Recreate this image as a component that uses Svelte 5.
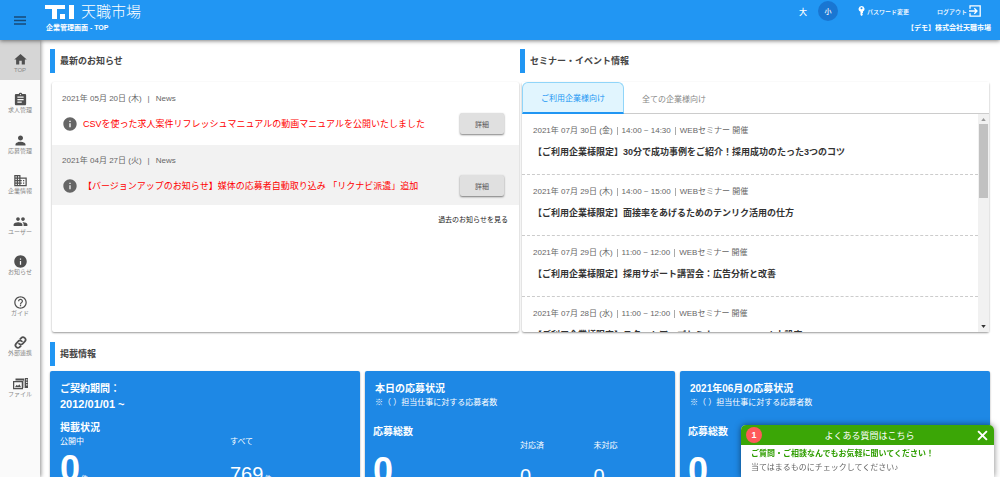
<script>
  const menu = [
    { label: 'TOP', icon: 'home', active: true },
    { label: '求人管理', icon: 'clipboard' },
    { label: '応募管理', icon: 'person' },
    { label: '企業情報', icon: 'building' },
    { label: 'ユーザー', icon: 'people' },
    { label: 'お知らせ', icon: 'info' },
    { label: 'ガイド', icon: 'help' },
    { label: '外部連携', icon: 'link' },
    { label: 'ファイル', icon: 'media' }
  ];

  const paths = {
    home: 'M10 20v-6h4v6h5v-8h3L12 3 2 12h3v8z',
    clipboard:
      'M19 3h-4.18C14.4 1.84 13.3 1 12 1s-2.4.84-2.82 2H5c-1.1 0-2 .9-2 2v14c0 1.1.9 2 2 2h14c1.1 0 2-.9 2-2V5c0-1.1-.9-2-2-2zm-7 0c.55 0 1 .45 1 1s-.45 1-1 1-1-.45-1-1 .45-1 1-1zm2 14H7v-2h7v2zm3-4H7v-2h10v2zm0-4H7V7h10v2z',
    person:
      'M12 12c2.21 0 4-1.79 4-4s-1.79-4-4-4-4 1.79-4 4 1.79 4 4 4zm0 2c-2.67 0-8 1.34-8 4v2h16v-2c0-2.66-5.33-4-8-4z',
    building:
      'M12 7V3H2v18h20V7H12zM6 19H4v-2h2v2zm0-4H4v-2h2v2zm0-4H4V9h2v2zm0-4H4V5h2v2zm4 12H8v-2h2v2zm0-4H8v-2h2v2zm0-4H8V9h2v2zm0-4H8V5h2v2zm10 12h-8v-2h2v-2h-2v-2h2v-2h-2V9h8v10zm-2-8h-2v2h2v-2zm0 4h-2v2h2v-2z',
    people:
      'M16 11c1.66 0 2.99-1.34 2.99-3S17.66 5 16 5s-3 1.34-3 3 1.34 3 3 3zm-8 0c1.66 0 2.99-1.34 2.99-3S9.66 5 8 5 5 6.34 5 8s1.34 3 3 3zm0 2c-2.33 0-7 1.17-7 3.5V19h14v-2.5c0-2.33-4.67-3.5-7-3.5zm8 0c-.29 0-.62.02-.97.05 1.16.84 1.97 1.97 1.97 3.45V19h6v-2.5c0-2.33-4.67-3.5-7-3.5z',
    info: 'M12 2C6.48 2 2 6.48 2 12s4.48 10 10 10 10-4.48 10-10S17.52 2 12 2zm1 15h-2v-6h2v6zm0-8h-2V7h2v2z',
    help: 'M11 18h2v-2h-2v2zm1-16C6.48 2 2 6.48 2 12s4.48 10 10 10 10-4.48 10-10S17.52 2 12 2zm0 18c-4.41 0-8-3.59-8-8s3.59-8 8-8 8 3.59 8 8-3.59 8-8 8zm0-14c-2.21 0-4 1.79-4 4h2c0-1.1.9-2 2-2s2 .9 2 2c0 2-3 1.75-3 5h2c0-2.25 3-2.5 3-5 0-2.21-1.79-4-4-4z',
    media:
      'M0 8h16v13H0zM2 10v9h12v-9zM3 18l3-4 2 2 2-3 3 5zM4 4h14v15h-1V7H4zM19 3h5v16h-5zM21 5v2h2V5zM21 9v2h2V9zM21 13v2h2v-2z'
  };

  const news = [
    {
      date: '2021年 05月 20日 (木)',
      title: 'CSVを使った求人案件リフレッシュマニュアルの動画マニュアルを公開いたしました'
    },
    {
      date: '2021年 04月 27日 (火)',
      title: '【バージョンアップのお知らせ】媒体の応募者自動取り込み 「リクナビ派遣」追加'
    }
  ];

  const seminars = [
    { date: '2021年 07月 30日 (金)', time: '14:00 ~ 14:30', title: '30分で成功事例をご紹介！採用成功のたった3つのコツ' },
    { date: '2021年 07月 29日 (木)', time: '14:00 ~ 15:00', title: '面接率をあげるためのテンリク活用の仕方' },
    { date: '2021年 07月 29日 (木)', time: '11:00 ~ 12:00', title: '採用サポート講習会：広告分析と改善' },
    { date: '2021年 07月 28日 (水)', time: '11:00 ~ 12:00', title: 'スタートアップセミナー@zoom Web上設定' }
  ];

  const applications = ['本日の応募状況', '2021年06月の応募状況'];

  let tab = $state(0);
  let chatOpen = $state(true);
</script>

{#snippet icon(name)}
  <svg class="icon" viewBox="0 0 24 24" aria-hidden="true">
    {#if name === 'link'}
      <g transform="rotate(-48 12 12)" fill="none" stroke="currentColor" stroke-width="2.8">
        <path d="M9 16H6a4 4 0 0 1 0-8h5a4 4 0 0 1 3.600 5.600" />
        <path d="M15 8h3a4 4 0 0 1 0 8h-5a4 4 0 0 1-3.600-5.600" />
      </g>
    {:else}
      <path fill="currentColor" fill-rule={name === 'media' ? 'evenodd' : 'nonzero'} d={paths[name]} />
    {/if}
  </svg>
{/snippet}

<div class="app">
  <header class="topbar">
    <button class="burger" aria-label="メニュー">
      <svg viewBox="0 0 12 9" aria-hidden="true"><path d="M0 1h12M0 4.5h12M0 8h12" stroke="currentColor" stroke-width="1.4" /></svg>
    </button>
    <div class="brand">
      <div class="logo">
        <svg viewBox="0 0 29 14" aria-hidden="true">
          <path fill="#fff" d="M0 0h20v4H12v10H7V4H0zM15 9h5v5h-5zM24 0h5v14h-5z" />
        </svg>
        <span>天職市場</span>
      </div>
      <div class="page-name">企業管理画面 - TOP</div>
    </div>
    <div class="account">
      <div class="tools">
        <button class="size">大</button>
        <button class="size on">小</button>
        <a class="password" href="#password">
          <svg viewBox="0 0 7 10" aria-hidden="true">
            <path fill="#fff" fill-rule="evenodd" d="M3.5 0a3 3 0 0 1 1.500 5.600V7l-1 .8 1 .9L3.600 10 2.500 9V5.800A3 3 0 0 1 3.500 0zm0 1.200a1 1 0 1 0 0 2 1 1 0 0 0 0-2z" />
          </svg>パスワード変更
        </a>
        <a class="logout" href="#logout">
          ログアウト<svg viewBox="0 0 12 12" fill="none" stroke="#fff" stroke-width="1.3" aria-hidden="true">
            <path d="M1 3.800V.8h10.200v10.400H1v-3M0 6h7.600M5.300 3.300 8 6 5.300 8.700" />
          </svg>
        </a>
      </div>
      <div class="company">【デモ】株式会社天職市場</div>
    </div>
  </header>

  <nav class="side">
    {#each menu as item}
      <a href="#{item.icon}" class:active={item.active}>{@render icon(item.icon)}<span>{item.label}</span></a>
    {/each}
  </nav>

  <main>
    <div class="columns">
      <section>
        <h2>最新のお知らせ</h2>
        <div class="card news">
          {#each news as item}
            <article>
              <div class="meta">{item.date}<i>|</i>News</div>
              <div class="line">
                {@render icon('info')}
                <a href="#news">{item.title}</a>
                <button>詳細</button>
              </div>
            </article>
          {/each}
          <a class="more" href="#past">過去のお知らせを見る</a>
        </div>
      </section>

      <section>
        <h2>セミナー・イベント情報</h2>
        <div class="card seminar">
          <div class="tabs" role="tablist">
            <button role="tab" aria-selected={tab === 0} class:on={tab === 0} onclick={() => (tab = 0)}>ご利用企業様向け</button>
            <button role="tab" aria-selected={tab === 1} class:on={tab === 1} onclick={() => (tab = 1)}>全ての企業様向け</button>
          </div>
          <div class="scroller">
            <div class="list">
              {#each seminars as s}
                <article>
                  <div class="meta">{s.date}<b></b>{s.time}<b></b>WEBセミナー 開催</div>
                  <h3>【ご利用企業様限定】{s.title}</h3>
                </article>
              {/each}
            </div>
            <div class="track" aria-hidden="true">
              <svg viewBox="0 0 6 4"><path d="M0 4 3 0 6 4z" fill="#999" /></svg>
              <div class="thumb"></div>
              <svg class="down" viewBox="0 0 6 4"><path d="M0 0 3 4 6 0z" fill="#333" /></svg>
            </div>
          </div>
        </div>
      </section>
    </div>

    <section class="posting">
      <h2>掲載情報</h2>
      <div class="stats">
        <div class="stat">
          <h3>ご契約期間：</h3>
          <p class="period">2012/01/01 ~</p>
          <h3>掲載状況</h3>
          <div class="pair">
            <div><span>公開中</span><div class="num"><strong>0</strong><small>件</small></div></div>
            <div><span>すべて</span><div class="num"><em>769</em><small>件</small></div></div>
          </div>
        </div>
        {#each applications as title}
          <div class="stat apply">
            <h3>{title}</h3>
            <p>※（ ）担当仕事に対する応募者数</p>
            <div class="trio">
              <div><h3>応募総数</h3><strong>0</strong></div>
              <div><span>対応済</span><em>0</em></div>
              <div><span>未対応</span><em>0</em></div>
            </div>
          </div>
        {/each}
      </div>
    </section>
  </main>

  {#if chatOpen}
    <aside class="chat">
      <header>
        <span class="badge">1</span>
        <span class="chat-title">よくある質問はこちら</span>
        <button aria-label="閉じる" onclick={() => (chatOpen = false)}>
          <svg viewBox="0 0 10 10" aria-hidden="true"><path d="M1 1l8 8M9 1 1 9" stroke="#fff" stroke-width="1.8" /></svg>
        </button>
      </header>
      <div class="chat-body">
        <b>ご質問・ご相談なんでもお気軽に聞いてください！</b>
        <span>当てはまるものにチェックしてください♪</span>
      </div>
    </aside>
  {/if}
</div>

<style>
  :global(body) {
    font-family: 'Liberation Sans', 'Noto Sans CJK JP', sans-serif;
    color: #444;
    background: #fff;
  }
  * {
    box-sizing: border-box;
  }
  h2,
  h3,
  p {
    margin: 0;
  }
  button {
    font: inherit;
    color: inherit;
    background: none;
    border: 0;
    padding: 0;
    cursor: pointer;
  }
  a {
    color: inherit;
    text-decoration: none;
  }
  svg {
    display: block;
    flex: none;
  }

  .app {
    display: grid;
    grid-template: auto 1fr / 40px 1fr;
    height: 100vh;
    overflow: hidden;
  }

  .topbar {
    grid-column: 1 / -1;
    display: flex;
    height: 40px;
    background: #2196f3;
    color: #fff;
    box-shadow: 0 1px 4px rgba(0, 0, 0, 0.5);
    z-index: 2;
  }
  .burger {
    width: 40px;
    display: grid;
    place-items: center;
    color: #174a78;
  }
  .burger svg {
    width: 12px;
    height: 9px;
  }
  .brand {
    padding: 3px 5px;
  }
  .logo {
    display: flex;
    align-items: center;
    gap: 7px;
    height: 18px;
    font-size: 15px;
    font-weight: 300;
    line-height: 18px;
  }
  .logo svg {
    width: 29px;
    height: 14px;
  }
  .page-name,
  .company {
    font-size: 7px;
    font-weight: 700;
    line-height: 14px;
  }
  .page-name {
    padding-left: 1px;
  }
  .account {
    margin-left: auto;
    padding: 1px 9px 0 0;
    text-align: right;
  }
  .tools {
    display: flex;
    align-items: center;
    justify-content: flex-end;
    height: 20px;
    font-size: 6px;
    font-weight: 500;
  }
  .size {
    width: 20px;
    height: 20px;
    border-radius: 50%;
    font-size: 8px;
  }
  .size.on {
    margin-left: 5px;
    background: #1976d2;
    font-size: 7px;
  }
  .password,
  .logout {
    display: flex;
    align-items: center;
    gap: 2px;
  }
  .password {
    margin-left: 20px;
  }
  .password svg {
    width: 7px;
    height: 10px;
  }
  .logout {
    margin: 0 10px 0 28px;
  }
  .logout svg {
    width: 12px;
    height: 12px;
  }

  .side {
    background: #fafafa;
    box-shadow: 1px 0 4px rgba(0, 0, 0, 0.45);
    z-index: 1;
  }
  .side a {
    display: flex;
    flex-direction: column;
    align-items: center;
    height: 40px;
    padding-top: 12px;
    color: #888;
    font-size: 6px;
    line-height: 7px;
  }
  .side a:nth-child(even) {
    height: 41px;
  }
  .side a.active {
    background: #d6d6d6;
  }
  .icon {
    width: 15px;
    height: 15px;
    color: #505050;
  }

  main {
    overflow-y: auto;
    scrollbar-width: none;
    padding: 9px 10px;
  }
  .columns {
    display: grid;
    grid-template-columns: 1fr 1fr;
  }
  section {
    min-width: 0;
  }
  h2 {
    border-left: 5px solid #2196f3;
    padding-left: 5px;
    font-size: 9px;
    line-height: 24px;
  }
  .card {
    margin: 9px 1px 0 2px;
    height: 250px;
    border-radius: 2px;
    box-shadow: 0 1px 2px rgba(0, 0, 0, 0.4);
  }
  .meta {
    display: flex;
    align-items: center;
    font-size: 8px;
    line-height: 12px;
    color: #666;
    white-space: pre;
  }
  .meta i {
    font-style: normal;
    margin: 0 6px;
  }
  .meta b {
    width: 1px;
    height: 8px;
    margin: 0 4px;
    background: #aaa;
  }

  .news article {
    height: 60px;
    padding: 10px 15px 0 10px;
  }
  .news article:first-child {
    height: 63px;
    padding-top: 11px;
  }
  .news article:nth-child(2) {
    background: #f2f2f2;
  }
  .line {
    display: flex;
    align-items: center;
    gap: 5px;
    margin-top: 8px;
    font-size: 9px;
    color: #f00;
  }
  .line .icon {
    width: 16px;
    height: 16px;
    color: #666;
  }
  .line a {
    white-space: nowrap;
  }
  .line button {
    margin-left: auto;
    width: 44px;
    height: 21px;
    border-radius: 2px;
    background: #e0e0e0;
    box-shadow: 0 1px 2px rgba(0, 0, 0, 0.5);
    color: #555;
    font-size: 7px;
  }
  .more {
    display: block;
    padding: 9px 11px;
    font-size: 7px;
    line-height: 12px;
    text-align: right;
    color: #222;
  }

  .seminar {
    display: flex;
    flex-direction: column;
  }
  .tabs {
    display: flex;
    height: 32px;
    background: #fff;
    border-bottom: 1px solid #ccc;
    font-size: 8px;
    color: #888;
  }
  .tabs button {
    height: 32px;
    padding: 0 18px;
    border-radius: 6px 6px 0 0;
  }
  .tabs button.on {
    border: 1px solid #90d5f9;
    border-bottom: 2px solid #2196f3;
    background: #e1f5fe;
    color: #2196f3;
  }
  .scroller {
    flex: 1;
    min-height: 0;
    display: flex;
  }
  .list {
    flex: 1;
    overflow-y: auto;
    scrollbar-width: none;
  }
  .list article {
    height: 61px;
    padding: 11px 10px 0 11px;
    border-bottom: 1px dashed #ccc;
  }
  .list h3 {
    margin-top: 8px;
    font-size: 9px;
    line-height: 14px;
    color: #333;
  }
  .track {
    width: 11px;
    display: flex;
    flex-direction: column;
    align-items: center;
    padding: 4px 1px;
    background: #f1f1f1;
  }
  .track svg {
    width: 5px;
    height: 3px;
  }
  .thumb {
    width: 9px;
    height: 74px;
    margin-top: 3px;
    background: #c1c1c1;
  }
  .down {
    margin-top: auto;
  }

  .posting {
    margin-top: 10px;
  }
  .stats {
    display: grid;
    grid-template-columns: repeat(3, 1fr);
    gap: 5px;
    margin-top: 5px;
  }
  .stat {
    height: 150px;
    padding: 10px;
    border-radius: 2px;
    background: #1e88e5;
    box-shadow: 0 1px 2px rgba(0, 0, 0, 0.4);
    color: #fff;
    font-size: 8px;
    line-height: 12px;
  }
  .stat h3 {
    font-size: 10px;
    line-height: 16px;
  }
  .period {
    margin-bottom: 8px;
    font-size: 11px;
    font-weight: 700;
    line-height: 15px;
  }
  .stat span,
  .stat em,
  .stat strong {
    display: block;
  }
  .stat em {
    font-size: 20px;
    font-style: normal;
    line-height: 24px;
  }
  .stat strong {
    font-size: 36px;
    line-height: 36px;
  }
  .stat small {
    margin-left: 1px;
    font-size: 7px;
  }
  .pair {
    display: grid;
    grid-template-columns: 170px 1fr;
  }
  .num {
    display: flex;
    align-items: baseline;
    height: 44px;
    padding-top: 3px;
  }
  .num em {
    line-height: 46px;
  }
  .trio {
    display: grid;
    grid-template-columns: 2fr 1fr 1fr;
    margin: 15px -2px 0;
  }
  .trio span {
    margin: 16px 0 12px;
  }
  .trio strong {
    margin-top: 13px;
  }

  .chat {
    position: fixed;
    right: 6px;
    bottom: 0;
    width: 253px;
    border-radius: 5px 5px 0 0;
    background: #fff;
    box-shadow: 0 0 6px rgba(0, 0, 0, 0.5);
    z-index: 3;
    overflow: hidden;
  }
  .chat header {
    display: flex;
    align-items: center;
    height: 20px;
    padding: 0 6px 0 5px;
    background: #3ba606;
    color: #fff;
    font-size: 9px;
  }
  .badge {
    width: 16px;
    height: 16px;
    border-radius: 50%;
    background: #ff5a5a;
    font-weight: 700;
    line-height: 16px;
    text-align: center;
  }
  .chat-title {
    flex: 1;
    text-align: center;
  }
  .chat header svg {
    width: 11px;
    height: 11px;
  }
  .chat-body {
    display: flex;
    flex-direction: column;
    height: 32px;
    padding: 2px 10px;
    font-size: 8px;
    line-height: 14px;
    color: #666;
    white-space: nowrap;
  }
  .chat-body b {
    color: #2f9e00;
  }
</style>
